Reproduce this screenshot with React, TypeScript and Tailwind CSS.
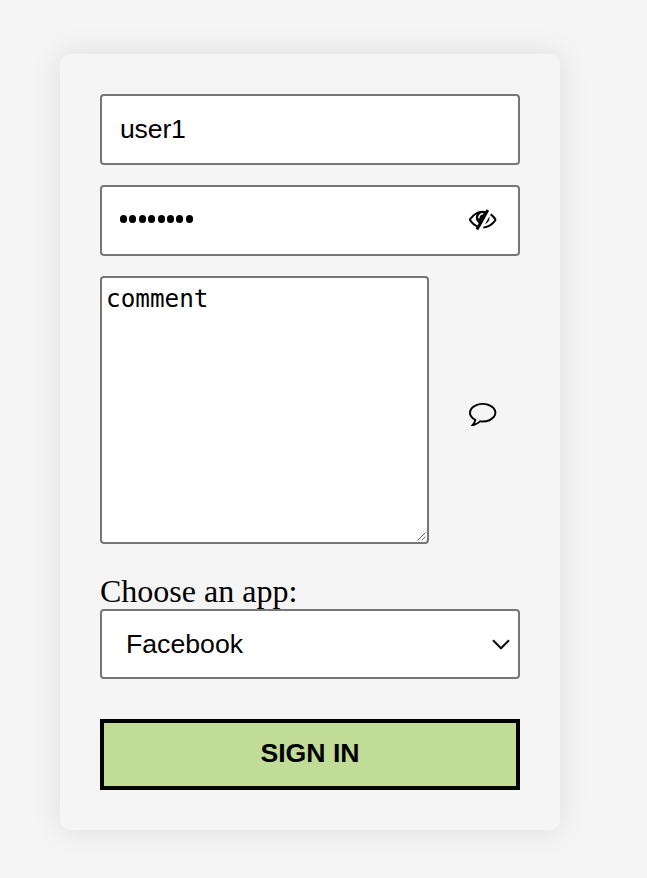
import { useState } from "react";

const ARIAL = "font-['Liberation_Sans',Arial,sans-serif]";

function EyeSlashIcon() {
  return (
    <svg viewBox="0 0 1792 1792" className="mb-[3px] size-[27.4px] fill-black">
      <path d="M555 1335l78-141q-87-63-136-159t-49-203q0-121 61-225-229 117-381 353 167 258 427 375zm389-759q0-20-14-34t-34-14q-125 0-214.5 89.5t-89.5 214.5q0 20 14 34t34 14 34-14 14-34q0-86 61-147t147-61q20 0 34-14t14-34zm363-191q0 7-1 9-106 189-316 567t-315 566l-49 89q-10 16-28 16-12 0-134-70-16-10-16-28 0-12 44-87-143-65-263.5-173t-208.5-245q-20-31-20-69t20-69q153-235 380-371t496-136q89 0 180 17l54-97q10-16 28-16 5 0 18 6t31 15.5 33 18.5 31.5 18.5 19.5 11.5q16 10 16 27zm37 447q0 139-79 253.5t-209 164.5l280-502q8 45 8 84zm448 128q0 35-20 69-39 64-109 145-150 172-347.5 267t-419.5 95l74-132q212-18 392.5-137t301.5-307q-115-179-282-294l63-112q95 64 182.5 153t144.5 178q20 34 20 69z" />
    </svg>
  );
}

function CommentIcon() {
  return (
    <svg viewBox="0 0 1792 1792" className="mt-[5px] size-[27.4px] fill-black">
      <path d="M896 384q-204 0-381.5 69.5t-282 187.5-104.5 255q0 112 71.5 213.5t201.5 175.5l87 50-27 96q-24 91-70 172 152-63 275-171l43-38 57 6q69 8 130 8 204 0 381.5-69.5t282-187.5 104.5-255-104.5-255-282-187.5-381.5-69.5zm896 512q0 174-120 321.5t-326 233-450 85.5q-70 0-145-8-198 175-460 242-49 14-114 22h-5q-15 0-27-10.5t-16-27.5v-1q-3-4-.5-12t2-10 4.5-9.5l6-9 7-8.5 8-9q7-8 31-34.5t34.5-38 31-39.5 32.5-51 27-59 26-76q-157-89-247.5-220t-90.5-281q0-130 71-248.5t191-204.5 286-136.5 348-50.5 348 50.5 286 136.5 191 204.5 71 248.5z" />
    </svg>
  );
}

export default function App() {
  const [user, setUser] = useState("user1");
  const [comment, setComment] = useState("comment");

  return (
    <main className="h-[878px] overflow-hidden bg-[#f5f5f5] pl-[60px] pt-[54px] text-black">
      <form className="flex h-[776px] w-[500px] flex-col rounded-[10px] bg-[#f5f5f5] p-10 shadow-[0_0_30px_rgba(0,0,0,0.1)]">
        <input
          value={user}
          onChange={(e) => setUser(e.target.value)}
          className={`h-[71px] w-full shrink-0 rounded-[4px] border-2 border-[#767676] bg-white px-[18px] pb-[1px] text-[26.67px] tracking-[-0.2px] outline-none ${ARIAL}`}
        />

        <div className="mt-5 flex h-[71px] shrink-0 items-center justify-between rounded-[4px] border-2 border-[#767676] bg-white pl-[18px] pr-[21.5px]">
          <div className="mt-[-3px] flex gap-[2.3px]">
            {Array.from({ length: 8 }, (_, i) => (
              <span key={i} className="h-[7.6px] w-[7.1px] rounded-full bg-black" />
            ))}
          </div>
          <EyeSlashIcon />
        </div>

        <div className="mt-5 flex h-[268px] shrink-0 items-center justify-between pr-[23.5px]">
          <div className="relative h-full w-[329px]">
            <textarea
              value={comment}
              onChange={(e) => setComment(e.target.value)}
              className="block size-full resize-none rounded-[4px] border-2 border-[#767676] bg-white px-1 py-[6px] font-['DejaVu_Sans_Mono',monospace] text-[24.3px] leading-[30px] outline-none"
            />
            <svg viewBox="0 0 9 9" className="absolute bottom-[3px] right-[3px] size-[9px]" fill="none" stroke="#555" strokeWidth="0.9">
              <path d="M.5 8.5l8-8M4.5 8.5l4-4" />
            </svg>
          </div>
          <CommentIcon />
        </div>

        <label className="mt-[29px] h-[36px] shrink-0 font-['Liberation_Serif','Times_New_Roman',serif] text-[32px] leading-[36px]">
          Choose an app:
        </label>
        <div className={`flex h-[70px] shrink-0 items-center justify-between rounded-[4px] border-2 border-[#767676] bg-white pl-6 pr-[8px] text-[26.67px] ${ARIAL}`}>
          <span>Facebook</span>
          <svg viewBox="0 0 18 11" className="h-[11px] w-[18px]" fill="none" stroke="#111" strokeWidth="2.2">
            <path d="M1 1.2l8 8 8-8" />
          </svg>
        </div>

        <button type="button" className={`mt-10 h-[71px] shrink-0 border-4 border-black bg-[#c1dc97] pb-[4px] text-[26.67px] font-bold ${ARIAL}`}>
          SIGN IN
        </button>
      </form>
    </main>
  );
}
